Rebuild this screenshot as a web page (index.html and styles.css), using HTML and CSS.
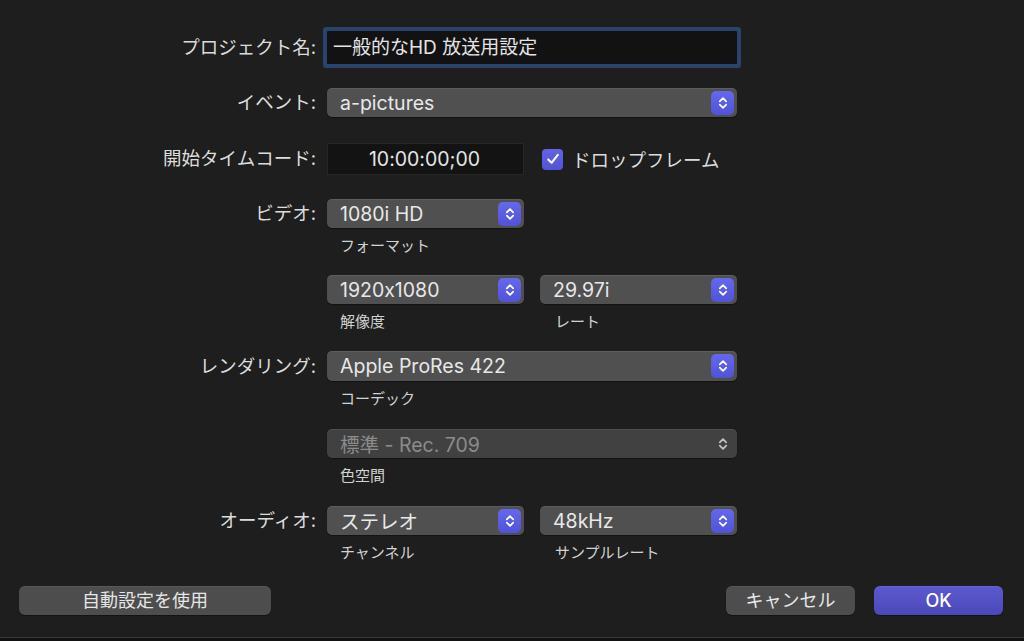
FILE: index.html
```html
<!DOCTYPE html>
<html lang="ja">
<head>
<meta charset="utf-8">
<link rel="stylesheet" href="styles.css">
</head>
<body>
<div class="dialog">
  <div class="form">
    <div class="row r-name">
      <div class="label">プロジェクト名:</div>
      <div class="control"><div class="textfield focused">一般的なHD 放送用設定</div></div>
    </div>

    <div class="row r-event">
      <div class="label">イベント:</div>
      <div class="control">
        <div class="popup"><span class="val">a-pictures</span><span class="stepper"><svg viewBox="0 0 12 16" width="12" height="16"><path d="M2.8 6.4 L6 3.2 L9.2 6.4 M2.8 9.6 L6 12.8 L9.2 9.6" fill="none" stroke="#fff" stroke-width="1.7" stroke-linecap="round" stroke-linejoin="round"/></svg></span></div>
      </div>
    </div>

    <div class="row r-tc">
      <div class="label">開始タイムコード:</div>
      <div class="control pair">
        <div class="tcfield">10:00:00;00</div>
        <div class="check"><span class="box"><svg viewBox="0 0 20 20" width="20" height="20"><path d="M5.2 10.4 L8.6 13.8 L14.8 5.8" fill="none" stroke="#fff" stroke-width="2.1" stroke-linecap="round" stroke-linejoin="round"/></svg></span><span class="ctext">ドロップフレーム</span></div>
      </div>
    </div>

    <div class="row r-video">
      <div class="label">ビデオ:</div>
      <div class="control pair">
        <div class="cell">
          <div class="popup"><span class="val">1080i HD</span><span class="stepper"><svg viewBox="0 0 12 16" width="12" height="16"><path d="M2.8 6.4 L6 3.2 L9.2 6.4 M2.8 9.6 L6 12.8 L9.2 9.6" fill="none" stroke="#fff" stroke-width="1.7" stroke-linecap="round" stroke-linejoin="round"/></svg></span></div>
          <div class="sub">フォーマット</div>
        </div>
      </div>
    </div>

    <div class="row r-res">
      <div class="label"></div>
      <div class="control pair">
        <div class="cell">
          <div class="popup"><span class="val">1920x1080</span><span class="stepper"><svg viewBox="0 0 12 16" width="12" height="16"><path d="M2.8 6.4 L6 3.2 L9.2 6.4 M2.8 9.6 L6 12.8 L9.2 9.6" fill="none" stroke="#fff" stroke-width="1.7" stroke-linecap="round" stroke-linejoin="round"/></svg></span></div>
          <div class="sub">解像度</div>
        </div>
        <div class="cell">
          <div class="popup"><span class="val">29.97i</span><span class="stepper"><svg viewBox="0 0 12 16" width="12" height="16"><path d="M2.8 6.4 L6 3.2 L9.2 6.4 M2.8 9.6 L6 12.8 L9.2 9.6" fill="none" stroke="#fff" stroke-width="1.7" stroke-linecap="round" stroke-linejoin="round"/></svg></span></div>
          <div class="sub">レート</div>
        </div>
      </div>
    </div>

    <div class="row r-render">
      <div class="label">レンダリング:</div>
      <div class="control">
        <div class="popup tall"><span class="val">Apple ProRes 422</span><span class="stepper"><svg viewBox="0 0 12 16" width="12" height="16"><path d="M2.8 6.4 L6 3.2 L9.2 6.4 M2.8 9.6 L6 12.8 L9.2 9.6" fill="none" stroke="#fff" stroke-width="1.7" stroke-linecap="round" stroke-linejoin="round"/></svg></span></div>
        <div class="sub">コーデック</div>
      </div>
    </div>

    <div class="row r-color">
      <div class="label"></div>
      <div class="control">
        <div class="popup disabled"><span class="val">標準 - Rec. 709</span><span class="stepper plain"><svg viewBox="0 0 12 16" width="12" height="16"><path d="M2.8 6.4 L6 3.2 L9.2 6.4 M2.8 9.6 L6 12.8 L9.2 9.6" fill="none" stroke="#c4c4c4" stroke-width="1.7" stroke-linecap="round" stroke-linejoin="round"/></svg></span></div>
        <div class="sub">色空間</div>
      </div>
    </div>

    <div class="row r-audio">
      <div class="label">オーディオ:</div>
      <div class="control pair">
        <div class="cell">
          <div class="popup"><span class="val">ステレオ</span><span class="stepper"><svg viewBox="0 0 12 16" width="12" height="16"><path d="M2.8 6.4 L6 3.2 L9.2 6.4 M2.8 9.6 L6 12.8 L9.2 9.6" fill="none" stroke="#fff" stroke-width="1.7" stroke-linecap="round" stroke-linejoin="round"/></svg></span></div>
          <div class="sub">チャンネル</div>
        </div>
        <div class="cell">
          <div class="popup"><span class="val">48kHz</span><span class="stepper"><svg viewBox="0 0 12 16" width="12" height="16"><path d="M2.8 6.4 L6 3.2 L9.2 6.4 M2.8 9.6 L6 12.8 L9.2 9.6" fill="none" stroke="#fff" stroke-width="1.7" stroke-linecap="round" stroke-linejoin="round"/></svg></span></div>
          <div class="sub">サンプルレート</div>
        </div>
      </div>
    </div>
  </div>

  <div class="buttons">
    <div class="btn auto">自動設定を使用</div>
    <div class="spacer"></div>
    <div class="btn cancel">キャンセル</div>
    <div class="btn ok">OK</div>
  </div>
</div>
<div class="footer"></div>
</body>
</html>
```

FILE: styles.css
```css
* { box-sizing: border-box; }
html, body {
  margin: 0;
  padding: 0;
  background: #1e1e1e;
  width: 1024px;
  height: 641px;
  overflow: hidden;
}
body {
  font-family: Inter, "Noto Sans CJK JP", sans-serif;
  font-feature-settings: "calt" 0;
  color: #dedede;
  display: flex;
  flex-direction: column;
}
.dialog {
  flex: 1;
  display: flex;
  flex-direction: column;
  padding-top: 31px;
}
.form {
  display: flex;
  flex-direction: column;
}
.row {
  display: grid;
  grid-template-columns: 316px 410px;
  column-gap: 11px;
  align-items: start;
}
.label {
  text-align: right;
  font-size: 18.5px;
  line-height: 22px;
  color: #dcdcdc;
  white-space: nowrap;
}
.r-name .label { margin-top: 5px; }
.r-event { margin-top: 24px; }
.r-event .label { margin-top: 3px; }
.r-tc { margin-top: 26px; }
.r-tc .label { margin-top: 4px; }
.r-video { margin-top: 24px; }
.r-video .label { margin-top: 3px; }
.r-res { margin-top: 20px; }
.r-render { margin-top: 20px; }
.r-render .label { margin-top: 4px; }
.r-color { margin-top: 21px; }
.r-audio { margin-top: 21px; }
.r-audio .label { margin-top: 3px; }

.control { display: flex; flex-direction: column; }
.control.pair {
  display: grid;
  grid-template-columns: 197px 197px;
  column-gap: 16px;
  align-items: start;
}
.cell { display: flex; flex-direction: column; }

.textfield {
  height: 33px;
  background: #121212;
  border-radius: 1px;
  font-size: 19px;
  line-height: 33px;
  padding-left: 6px;
  color: #e4e4e4;
  box-shadow: 0 0 0 4px #29446c;
  white-space: nowrap;
}
.tcfield {
  height: 32px;
  background: #131313;
  border: 1px solid #262626;
  font-size: 19.5px;
  line-height: 30px;
  text-align: center;
  color: #e6e6e6;
  padding-right: 2px;
}
.check {
  display: flex;
  align-items: center;
  height: 32px;
  margin-left: 2px;
}
.check .box {
  width: 21px;
  height: 21px;
  border-radius: 4px;
  background: linear-gradient(#6264e6, #5254d4);
  display: flex;
  align-items: center;
  justify-content: center;
}
.check .ctext {
  margin-left: 9px;
  font-size: 18.5px;
  color: #dcdcdc;
  white-space: nowrap;
}

.popup {
  height: 29px;
  border-radius: 5px;
  background: #505050;
  box-shadow: inset 0 1px 0 rgba(255,255,255,0.08), 0 1px 1px rgba(0,0,0,0.4);
  display: flex;
  align-items: center;
  justify-content: space-between;
  padding: 0 3px 0 13px;
}
.popup.tall { height: 30px; }
.popup .val {
  font-size: 19.5px;
  color: #e8e8e8;
  white-space: nowrap;
}
.stepper {
  width: 23px;
  height: 24px;
  border-radius: 5px;
  background: linear-gradient(#6568ea, #5053d6);
  display: flex;
  align-items: center;
  justify-content: center;
}
.stepper.plain { background: transparent; }
.popup.disabled { background: #414141; }
.popup.disabled .val { color: #8c8c8c; }

.sub {
  margin-top: 9px;
  padding-left: 13px;
  font-size: 15px;
  line-height: 18px;
  color: #d2d2d2;
  white-space: nowrap;
}
.cell + .cell .sub { padding-left: 15px; }

.buttons {
  margin-top: 24px;
  display: flex;
  padding: 0 21px 0 19px;
  column-gap: 19px;
}
.spacer { flex: 1; }
.btn {
  height: 29px;
  border-radius: 6px;
  background: #4d4d4d;
  box-shadow: inset 0 1px 0 rgba(255,255,255,0.07), 0 1px 1px rgba(0,0,0,0.4);
  font-size: 18px;
  line-height: 29px;
  text-align: center;
  color: #e6e6e6;
}
.btn.auto { width: 252px; }
.btn.cancel { width: 129px; }
.btn.ok {
  width: 129px;
  background: linear-gradient(#5b59cf, #4b49b8);
  color: #fff;
  font-weight: 500;
}
.footer {
  height: 4px;
  border-top: 1px solid #3a3a3a;
  background: #121212;
}
```
